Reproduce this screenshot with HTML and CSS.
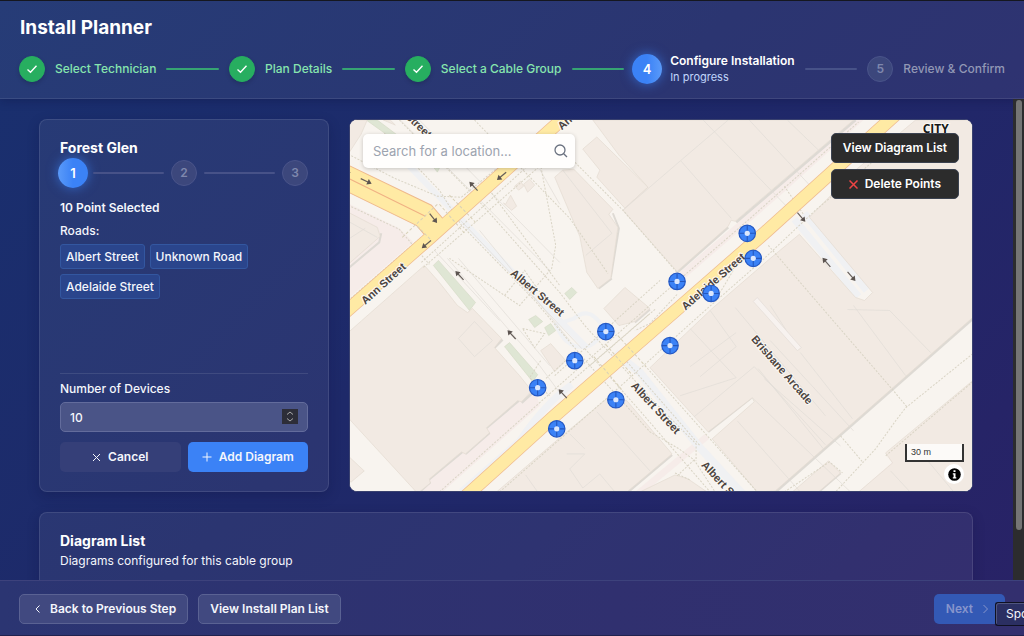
FILE: index.html
```html
<!DOCTYPE html>
<html lang="en">
<head>
<meta charset="utf-8">
<meta name="viewport" content="width=device-width, initial-scale=1">
<title>Install Planner</title>
<link rel="stylesheet" href="styles.css">
</head>
<body>
<div class="app">
  <header class="header">
    <h1 class="title">Install Planner</h1>
    <div class="steps">
      <span class="dot done"><svg width="12" height="12" viewBox="0 0 12 12"><path d="M1.5 6.5 4.5 9.2 10.5 2.8"/></svg></span>
      <span class="step-name done-text">Select Technician</span>
      <span class="bar bar-done"></span>
      <span class="dot done"><svg width="12" height="12" viewBox="0 0 12 12"><path d="M1.5 6.5 4.5 9.2 10.5 2.8"/></svg></span>
      <span class="step-name done-text">Plan Details</span>
      <span class="bar bar-done"></span>
      <span class="dot done"><svg width="12" height="12" viewBox="0 0 12 12"><path d="M1.5 6.5 4.5 9.2 10.5 2.8"/></svg></span>
      <span class="step-name done-text">Select a Cable Group</span>
      <span class="bar bar-done"></span>
      <span class="dot current">4</span>
      <span class="step-name current-text">Configure Installation<small>In progress</small></span>
      <span class="bar"></span>
      <span class="dot">5</span>
      <span class="step-name">Review &amp; Confirm</span>
    </div>
  </header>

  <div class="body">
    <main class="content">
      <div class="workspace">
        <section class="card panel">
          <h2 class="card-title">Forest Glen</h2>
          <div class="mini-steps">
            <span class="dot current">1</span><span class="bar"></span>
            <span class="dot">2</span><span class="bar"></span>
            <span class="dot">3</span>
          </div>
          <p class="selected">10 Point Selected</p>
          <p class="roads-label">Roads:</p>
          <div class="chips">
            <span class="chip">Albert Street</span>
            <span class="chip">Unknown Road</span>
            <span class="chip">Adelaide Street</span>
          </div>
          <form class="device-form">
            <label class="label" for="devices">Number of Devices</label>
            <div class="number">
              <input id="devices" type="number" value="10">
              <svg class="spinner" width="16" height="15" viewBox="0 0 16 15"><path d="M5 5.5 8 3l3 2.500M5 9.500 8 12l3-2.500"/></svg>
            </div>
            <div class="actions">
              <button type="button" class="btn btn-quiet"><svg width="9" height="9" viewBox="0 0 9 9"><path d="M1 1l7 7M8 1 1 8"/></svg>Cancel</button>
              <button type="button" class="btn btn-primary"><svg width="10" height="10" viewBox="0 0 10 10"><path d="M5 .5v9M.5 5h9"/></svg>Add Diagram</button>
            </div>
          </form>
        </section>

        <section class="map">
          <svg class="map-art" viewBox="350 120 622 370" preserveAspectRatio="xMidYMid slice" role="img" aria-label="Street map">
            <defs>
              <g id="arrow"><path d="M-6 0H3" stroke="#665e59" stroke-width="1.200"/><path d="M1.500-3 6 0 1.500 3Z" fill="#5c5450"/></g>
              <g id="pin"><circle r="8.200" fill="#3b82f6" stroke="#2559c4" stroke-width="1.200"/><path d="M-8 0H8M0-8V8" stroke="#2457bd" stroke-width="1.100"/><circle r="2.600" fill="#dbe7fd"/></g>
            </defs>
            <rect x="345" y="115" width="635" height="385" fill="#f8f4ef"/>
            <g class="plaza">
              <path d="M349 203 400 228 414 242 349 298Z"/>
              <path d="M349 415 417 491H443L540 405 534 384 500 390Z"/>
              <path d="M677 274 772 193 855 120H863L778 197 680 282Z"/>
              <path d="M635 491 705 433 709 438 645 491Z"/>
              <path d="M858 491 892 461 885 455 895 462 862 491Z"/>
            </g>
            <g class="cycle">
              <path d="M410 166 565 325 586 346" stroke-width="6"/>
              <path d="M462 491 520 440Q546 402 572 384" stroke-width="7"/>
              <path d="M615 352 640 372 700 447 746 497" stroke-width="8"/>
              <path d="M794 219 858 296M804 213 866 290" stroke-width="7"/>
              <path d="M556 324Q568 352 590 345Q606 336 600 322Q588 306 574 318Z" stroke-width="4"/>
            </g>
            <g class="green">
              <path d="M367 120H378L398 135H388Z"/><path d="M434 265 439 260 476 302 470 310Z"/>
              <path d="M505 346 510 342 538 374 533 381Z"/><path d="M529 319 536 315 543 321 535 327Z"/><path d="M545 327 551 323 556 330 549 335Z"/><path d="M565 293 572 287 577 292 570 299Z"/><path d="M430 162 440 168 438 172Z"/>
            </g>
            <g class="shade">
              <path d="M677 272 728 227M736 222 855 120" stroke-width="2.600"/>
              <path d="M972 318 775 491" stroke-width="3"/>
              <path d="M708 431 751 397M628 491 672 454M840 472 818 491" stroke-width="2.500"/>
              <path d="M420 491 431 481M430 478 463 451M466 453 490 432M487 427 519 400M522 402 533 392M495 347 503 339" stroke-width="2.500"/>
              <path d="M611 277 619 228 613 213M599 288 612 278M635 322 650 309" stroke-width="2"/>
              <path d="M349 268 380 242 382 233" stroke-width="2"/>
            </g>
            <g class="building">
              <path d="M349 120H368L362 134 349 154Z"/>
              <path d="M349 212 378 227 381 236 349 264Z"/>
              <path d="M349 332 425 265 440 282 458 305 468 312 473 308 502 338 495 347 520 375 532 390 522 401 518 400 487 427 490 432 466 453 462 451 430 478 431 482 420 491H417L349 417Z"/>
              <path d="M349 455 365 470 352 481 349 480Z"/>
              <path d="M384 120H391L396 125Z"/>
              <path d="M555 177 563 170 574 169 613 209 609 214 618 227 611 278 598 288 587 272 580 236Z"/>
              <path d="M583 149 597 137 648 187 625 208 597 177 600 170Z"/>
              <path d="M593 120H853L770 191 735 221 731 220 728 226 677 271 623 210 648 187 619 155Z"/>
              <path d="M915 120H973V316L775 490 757 491 712 438 754 401 752 397 708 431 650 367 712 308 770 258 799 234 855 297 864 300 872 292 809 217 855 170Z"/>
              <path d="M973 379 885 452 892 462 858 491H973Z"/><path d="M828 460 840 472 818 491H792Z"/>
              <path d="M497 491 560 437 608 397 627 400 672 453 627 491Z"/><path d="M640 491 675 474 688 478 707 491Z"/>
              <path d="M604 308 625 287 650 308 635 321 619 325Z"/><path d="M541 350 551 343 566 360 555 371Z"/><path d="M506 204 511 195 517 206 512 210 504 203Z"/><path d="M515 186 521 181 524 186 519 190Z"/><path d="M524 184 530 179 535 185 528 192Z"/>
            </g>
            <g class="outline">
              <path d="M623 210 680 161 728 120M703 120 790 210M681 161 731 218M749 120 812 188M787 120 818 150"/>
              <path d="M563 170 612 233 586 255M349 221 378 237M349 239 366 228"/>
              <path d="M459 338 475 321 493 340 475 356Z"/>
              <path d="M690 328 736 377 680 395M710 310 736 346 700 376M694 416 754 366 770 383M752 397 850 491M737 420 800 491M770 383 825 444M764 378 840 445M770 340 853 430M690 366 736 332M758 368 823 448M847 309 889 310 930 352M853 305 905 375"/>
              <path d="M800 352 852 418M770 305 797 347M735 307 825 415M597 411 650 470M567 453 585 453 570 468 583 487 600 473 615 491M570 433 585 448M526 474 538 491M890 470 915 497M923 455 953 491"/>
              <path d="M448 258 540 365 560 392M459 258 550 365M480 230 570 340M435 250 500 320M461 220 582 348M540 169 560 204M401 120 550 270M420 120 560 262"/>
            </g>
            <path d="M753 301 797 350 801 347 757 297Z" fill="#f7f2ef" stroke="#e4ddd7" stroke-width=".7"/>
            <g class="paths">
              <path d="M349 154 395 178 438 196 462 197 500 166M349 205 400 229 430 264M349 300 430 230M424 267 555 153 575 162 623 210 677 272"/>
              <path d="M422 262 550 146M385 133 440 190 462 225 535 300 590 365 650 431 679 448 694 459 715 491"/>
              <path d="M400 120 475 196 560 292 585 325 655 402 696 443V460"/>
              <path d="M475 120 570 218 608 273M540 160 556 245 552 268 520 305 450 258M490 190 560 285"/>
              <path d="M440 491 550 393 660 296 750 218 858 122M500 491 620 386 706 309 762 260 815 210 900 138"/>
              <path d="M523 328 545 333 535 347ZM546 300 525 270 505 295M555 375 620 316 660 280"/>
              <path d="M585 348 640 410 710 491M645 365 757 491M620 353 700 445M590 365 656 308M570 382 650 313"/>
              <path d="M784 186 803 214M768 245 892 389 907 407M972 353 905 407 895 420 875 448 835 491M840 435 862 461M972 381 885 455M784 491 829 461 842 472M675 472 690 479"/>
              <path d="M541 360 530 377 550 395M566 360 546 378M733 270 720 292M694 459 677 475M677 294 650 323 635 330"/>
            </g>
            <g class="road-edge"><path d="M340 317 430 238 565 117 580 103"/><path d="M460 501 555 415 678 308 765 232 900 110"/></g>
            <path d="M345 163 432 205 444 219 430 240 417 225 345 190Z" fill="#ffeaa4" stroke="#efb98b" stroke-width="1"/>
            <g class="road"><path d="M340 317 430 238 565 117 580 103"/><path d="M460 501 555 415 678 308 765 232 900 110"/></g>
            <path d="M349 178 426 216" fill="none" stroke="#f0b184" stroke-width="1"/>
            <g class="crossing"><path d="M403 237 438 204M418 226 432 240M440 204 466 234M450 195 476 222M594 356 622 389M606 344 633 375M618 335 646 366"/></g>
            <g class="labels">
              <text transform="translate(384 283) rotate(-42)">Ann Street</text>
              <text transform="translate(538 292) rotate(40)">Albert Street</text>
              <text transform="translate(656 407) rotate(47)">Albert Street</text>
              <text transform="translate(726 486) rotate(47)">Albert Street</text>
              <text transform="translate(782 369) rotate(49)">Brisbane Arcade</text>
              <text transform="translate(713 281) rotate(-41)">Adelaide Street</text>
              <text transform="translate(407 113) rotate(44)">Albert Street</text>
              <text transform="translate(580 109) rotate(-42)">Ann Street</text>
              <text class="city" x="935" y="128">CITY</text>
            </g>
            <use href="#arrow" transform="translate(367 181) rotate(25)"/><use href="#arrow" transform="translate(346 170) rotate(25)"/>
            <use href="#arrow" transform="translate(434 218) rotate(52)"/><use href="#arrow" transform="translate(427 244) rotate(140)"/>
            <use href="#arrow" transform="translate(502 176) rotate(140)"/><use href="#arrow" transform="translate(474 186) rotate(227)"/>
            <use href="#arrow" transform="translate(460 275) rotate(227)"/><use href="#arrow" transform="translate(512 334) rotate(227)"/>
            <use href="#arrow" transform="translate(563 393) rotate(227)"/><use href="#arrow" transform="translate(801 217) rotate(49)"/>
            <use href="#arrow" transform="translate(826 262) rotate(229)"/><use href="#arrow" transform="translate(851 276) rotate(49)"/>
            <use href="#pin" x="747" y="233"/><use href="#pin" x="753" y="258"/><use href="#pin" x="677" y="281"/><use href="#pin" x="711" y="293"/><use href="#pin" x="670" y="345"/>
            <use href="#pin" x="606" y="331"/><use href="#pin" x="575" y="360"/><use href="#pin" x="538" y="387"/><use href="#pin" x="616" y="399"/><use href="#pin" x="557" y="428"/>
          </svg>
          <div class="search">
            <input type="text" placeholder="Search for a location..." aria-label="Search for a location">
            <svg width="14" height="14" viewBox="0 0 14 14"><circle cx="6" cy="6" r="5"/><path d="M9.700 9.700 13 13"/></svg>
          </div>
          <div class="map-actions">
            <button type="button" class="btn btn-dark">View Diagram List</button>
            <button type="button" class="btn btn-dark"><svg class="red" width="9" height="9" viewBox="0 0 9 9"><path d="M.5.5l8 8M8.500.5l-8 8"/></svg>Delete Points</button>
          </div>
          <div class="map-info">
            <div class="scale">30 m</div>
            <button type="button" class="info" aria-label="Map information"><svg width="13" height="13" viewBox="0 0 13 13"><circle cx="6.500" cy="6.500" r="6.300"/><path d="M5.500 2.300h2v1.800h-2zM4.800 5.200h2.700v4h.8v1.300H4.800V9.200h.8V6.500h-.8z" fill="#fff"/></svg></button>
          </div>
        </section>
      </div>

      <section class="card list">
        <h2 class="card-title">Diagram List</h2>
        <p class="sub">Diagrams configured for this cable group</p>
      </section>
    </main>
    <div class="track"><div class="thumb"></div></div>
  </div>

  <footer class="footer">
    <button type="button" class="btn btn-glass back"><svg width="7" height="10" viewBox="0 0 7 10"><path d="M5.500 1.500 2 5l3.500 3.500"/></svg>Back to Previous Step</button>
    <button type="button" class="btn btn-glass">View Install Plan List</button>
    <button type="button" class="btn btn-next" disabled>Next<svg width="7" height="10" viewBox="0 0 7 10"><path d="M1.500 1 5.500 5l-4 4"/></svg></button>
    <div class="tooltip">Spo</div>
  </footer>
</div>
</body>
</html>
```
FILE: styles.css
```css
* { box-sizing: border-box; }
body {
  margin: 0;
  font: 500 12px/16px Inter, "Liberation Sans", sans-serif;
  color: #f4f6fc;
}
h1, h2, p { margin: 0; }
button, input { font: inherit; color: inherit; }
svg { fill: none; stroke: currentColor; flex: none; }

.app {
  height: 100vh;
  display: flex;
  flex-direction: column;
  overflow: hidden;
  border-top: 1px solid #15171f;
  background: linear-gradient(135deg, #19306f 0%, #1e2969 45%, #212769 65%, #262467 85%, #292266 100%);
}

/* Header and progress */
.header {
  padding: 15px 19px 13px;
  background: rgba(255, 255, 255, .06);
  border-bottom: 1px solid rgba(255, 255, 255, .09);
  box-shadow: 0 3px 8px rgba(10, 15, 60, .25);
}
.title { padding-left: 1px; font-size: 19px; font-weight: 700; line-height: 24px; color: #fff; }
.steps { display: flex; align-items: center; gap: 10px; height: 32px; margin-top: 13px; }
.step-name { white-space: nowrap; color: #9298b5; }
.done-text { color: #86e5ae; }
.current-text { color: #fff; font-weight: 600; }
.step-name small { display: block; font-size: 11px; font-weight: 400; color: #c0d6fb; }
.bar { flex: 1; height: 2px; border-radius: 1px; background: #475288; }
.bar-done { background: #36a473; }
.dot {
  flex: none;
  width: 26px;
  height: 26px;
  display: grid;
  place-items: center;
  border-radius: 50%;
  font-weight: 600;
  color: #7f87ad;
  background: #3c477c;
  border: 1px solid #4a548a;
}
.dot.done { color: #fff; background: #27ae60; border-color: #27ae60; box-shadow: 0 2px 4px rgba(0, 0, 0, .15); }
.dot svg { stroke-width: 1.4; }
.dot.current {
  width: 30px;
  height: 30px;
  margin: 0 -2px;
  color: #fff;
  font-size: 13px;
  border: 0;
  background: linear-gradient(90deg, #3b82f6 50%, #5a9af9);
  box-shadow: 0 0 12px rgba(59, 130, 246, .65);
}
.mini-steps .dot.current { background: linear-gradient(270deg, #3b82f6 50%, #5a9af9); }

/* Content */
.body { flex: 1; min-height: 0; display: flex; }
.content { flex: 1; min-width: 0; overflow: hidden; padding: 20px 40px 0 39px; display: flex; flex-direction: column; gap: 20px; }
.workspace { flex: none; display: grid; grid-template-columns: 290px minmax(0, 1fr); gap: 20px; }
.card {
  padding: 19px 20px;
  border-radius: 8px;
  border: 1px solid rgba(255, 255, 255, .1);
  background: rgba(255, 255, 255, .06);
  box-shadow: 0 4px 12px rgba(10, 15, 60, .25);
}
.card-title { font-size: 14px; font-weight: 700; line-height: 18px; color: #fff; }
.panel { display: flex; flex-direction: column; }
.mini-steps { display: flex; align-items: center; gap: 7px; height: 30px; margin-top: 1px; }
.selected { font-weight: 600; margin-top: 12px; }
.roads-label { margin-top: 7px; }
.chips { display: flex; flex-wrap: wrap; align-content: flex-start; gap: 5px; margin-top: 5px; min-height: 129px; }
.chip { padding: 4px 5px; line-height: 15px; border: 1px solid #3357a0; border-radius: 3px; background: #2a458c; }
.device-form { border-top: 1px solid rgba(255, 255, 255, .1); padding-top: 7px; }
.label { display: block; }
.number { position: relative; margin-top: 5px; }
.number input {
  display: block;
  width: 100%;
  height: 30px;
  padding: 0 9px;
  border: 1px solid #636c9c;
  border-radius: 5px;
  background: #4a5487;
  appearance: textfield;
}
.number input::-webkit-inner-spin-button { appearance: none; margin: 0; }
.spinner { position: absolute; right: 10px; top: 7px; background: #2d2d38; color: #aaa; }
.actions { display: grid; grid-template-columns: 1fr 1fr; gap: 7px; margin-top: 10px; }

.btn {
  display: inline-flex;
  align-items: center;
  justify-content: center;
  gap: 7px;
  height: 30px;
  padding: 0 11px;
  border: 1px solid transparent;
  border-radius: 5px;
  font-weight: 600;
  white-space: nowrap;
}
.btn-quiet { background: #353f78; }
.btn-primary { background: #3b82f6; }
.btn-dark { background: #2c2c2c; border-color: #3b4250; color: #fff; }
.btn-glass { background: #414980; border-color: #5a6293; }
.red { color: #ef4444; stroke-width: 1.5; }

/* Map */
.map { position: relative; border: 1px solid #39416f; border-radius: 8px; overflow: hidden; background: #f8f4ef; }
.map-art { position: absolute; inset: 0; width: 100%; height: 100%; stroke: none; }
.plaza { fill: #f6ece9; }
.cycle { fill: none; stroke: #f0f1f3; }
.green { fill: #dfe6d4; stroke: #d3d8c4; stroke-width: .6; }
.shade { fill: none; stroke: #dedad4; }
.building { fill: #f2eae3; stroke: #e4dbd1; stroke-width: .7; }
.outline { fill: none; stroke: #e1ddd7; stroke-width: .7; }
.paths { fill: none; stroke: #d9d4c5; stroke-width: 1; stroke-dasharray: 2 1.5; }
.road-edge { fill: none; stroke: #efbd92; stroke-width: 13.5; }
.road { fill: none; stroke: #ffeaa4; stroke-width: 12; }
.crossing { fill: none; stroke: #d8d0b8; stroke-width: 1; stroke-dasharray: 3 2; }
.labels {
  font: 700 11px "Liberation Sans", sans-serif;
  fill: #4c443f;
  stroke: #fbf8f3;
  stroke-width: 2;
  paint-order: stroke;
  text-anchor: middle;
  dominant-baseline: central;
}
.city { font: 700 12px "Open Sans", sans-serif; fill: #171717; }
.search {
  position: absolute;
  left: 13px;
  top: 14px;
  width: 212px;
  height: 34px;
  display: flex;
  align-items: center;
  padding: 0 7px 0 10px;
  border-radius: 5px;
  background: #fffefd;
  box-shadow: 0 1px 4px rgba(0, 0, 0, .2);
  color: #6b7280;
}
.search input { flex: 1; min-width: 0; border: 0; padding: 0; outline: 0; background: none; font-size: 13px; font-weight: 400; }
.search input::placeholder { color: #9ca3af; opacity: 1; }
.search svg { stroke-width: 1.3; }
.map-actions { position: absolute; right: 13px; top: 13px; display: flex; flex-direction: column; gap: 6px; }
.map-info { position: absolute; right: 8px; bottom: 7px; display: flex; flex-direction: column; align-items: flex-end; gap: 2px; color: #333; }
.scale { width: 59px; height: 18px; padding-left: 4px; border: 2px solid #333; border-top: 0; background: rgba(255, 255, 255, .75); font: 9px/17px "Liberation Sans", sans-serif; }
.info { width: 20px; height: 20px; padding: 0; border: 0; border-radius: 50%; background: #fff; display: grid; place-items: center; }
.info svg { fill: #000; stroke: none; }

.list { flex: none; height: 150px; }
.list .sub { margin-top: 3px; font-weight: 400; }

.track { width: 11px; padding: 1px 2px 0 3px; background: #2c2c2e; }
.thumb { height: 430px; border-radius: 3px; background: #757575; }

/* Footer */
.footer {
  position: relative;
  flex: none;
  display: flex;
  gap: 10px;
  padding: 13px 19px 11px;
  background: linear-gradient(90deg, #2b3572, #30306f 60%, #332f6e);
  border-top: 1px solid #3d427c;
  border-bottom: 1px solid #20224e;
}
.back { gap: 9px; padding-left: 14px; }
.btn-next { margin-left: auto; gap: 9px; padding: 0 15px 0 11px; background: #3359b5; color: #8795cc; }
.tooltip { position: absolute; right: 0; bottom: 9px; width: 29px; height: 24px; padding-left: 10px; overflow: hidden; line-height: 22px; font-weight: 400; background: #2b2f62; border: 1px solid #0f1122; border-right: 0; border-radius: 3px 0 0 3px; box-shadow: inset 1px 1px #50557f; }
```
